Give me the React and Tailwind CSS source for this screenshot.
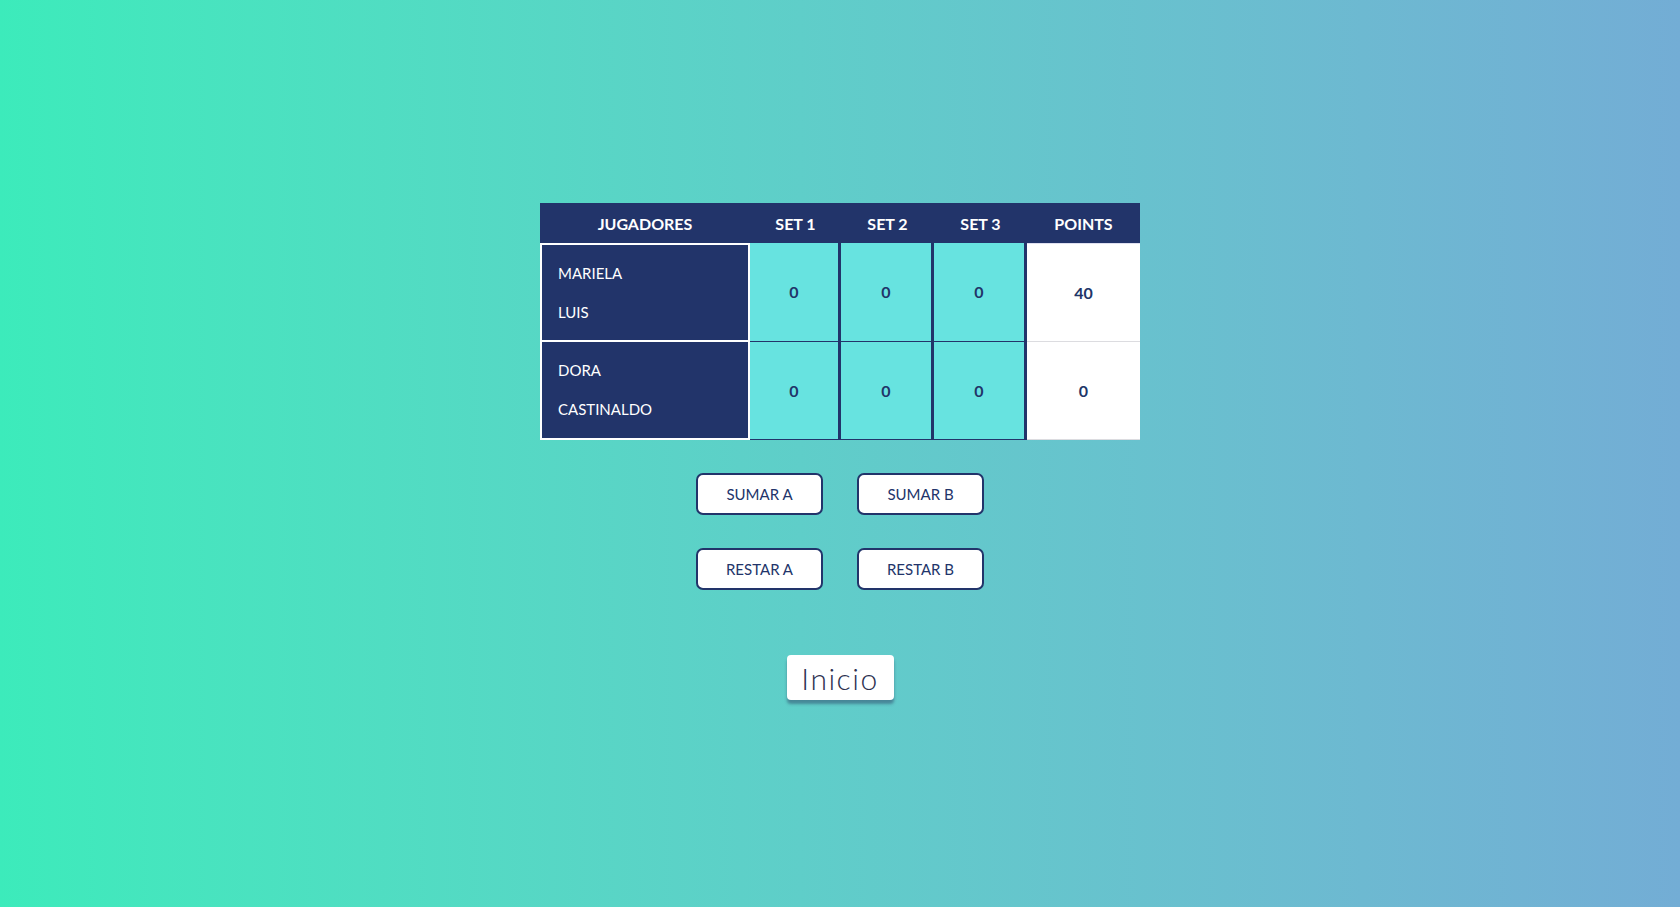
import React from "react";

const players = [
    { names: ["MARIELA", "LUIS"], sets: [0, 0, 0], points: 40 },
    { names: ["DORA", "CASTINALDO"], sets: [0, 0, 0], points: 0 },
];

const cols = "grid grid-cols-[210px_91px_93px_93px_113px]";

const App = () => {
    return (
        <div
            className="min-h-screen w-full flex flex-col items-center pt-[203px] bg-gradient-to-r from-[#3cebbb] to-[#73add5] text-[#213568]"
            style={{ fontFamily: "Lato, 'Open Sans', sans-serif" }}
        >
            {/* Score table */}
            <div className="w-[600px]">
                <div className={`${cols} h-[40px] bg-[#22346a] text-white font-bold text-[16px] pt-[2px]`}>
                    <div className="flex items-center justify-center">JUGADORES</div>
                    <div className="flex items-center justify-center">SET 1</div>
                    <div className="flex items-center justify-center">SET 2</div>
                    <div className="flex items-center justify-center">SET 3</div>
                    <div className="flex items-center justify-center">POINTS</div>
                </div>

                {players.map((p, i) => (
                    <div key={i} className={`${cols} ${i === 0 ? "h-[99px]" : "h-[98px]"}`}>
                        <div
                            className={`bg-[#22346a] border-2 border-white ${i === 1 ? "border-t-0" : ""} flex flex-col justify-center gap-[20px] pl-[16px] text-white text-[15px]`}
                        >
                            {p.names.map((n) => (
                                <span key={n} className="leading-[19px]">{n}</span>
                            ))}
                        </div>
                        {p.sets.map((s, j) => (
                            <div
                                key={j}
                                className="bg-[#67e3e0] border-r-[3px] border-b border-[#22346a] flex items-center justify-center font-bold text-[16px]"
                            >
                                {s}
                            </div>
                        ))}
                        <div
                            className={`bg-white border-b border-[#dcdce0] ${i === 0 ? "border-t border-t-[#dfe0f0]" : ""} flex items-center justify-center font-bold text-[16px]`}
                        >
                            {p.points}
                        </div>
                    </div>
                ))}
            </div>

            {/* Buttons */}
            <div className="grid grid-cols-2 gap-x-[34px] gap-y-[33px] mt-[33px]">
                {["SUMAR A", "SUMAR B", "RESTAR A", "RESTAR B"].map((label) => (
                    <button
                        key={label}
                        className="w-[127px] h-[42px] bg-white border-2 border-[#22346a] rounded-[7px] text-[15px] text-[#22346a]"
                    >
                        {label}
                    </button>
                ))}
            </div>

            <button className="mt-[65px] w-[107px] h-[45px] bg-white rounded-[4px] shadow-[0_4px_3px_rgba(40,50,90,0.45)] text-[30px] font-light tracking-[1.5px] text-[#2d3150] leading-none">
                Inicio
            </button>
        </div>
    );
};

export default App;
